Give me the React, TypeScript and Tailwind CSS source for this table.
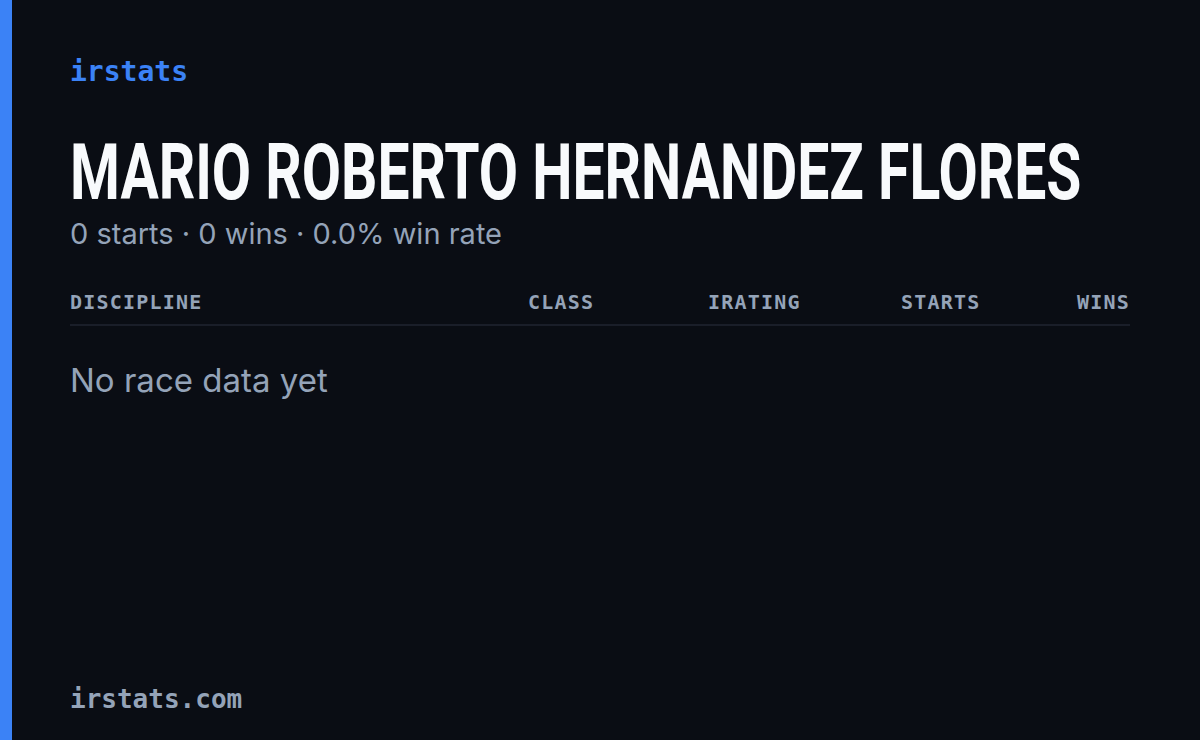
import React from "react";

export default function App() {
  const mono = { fontFamily: "'DejaVu Sans Mono', 'Liberation Mono', monospace" };
  const sans = { fontFamily: "'Inter', 'Open Sans', sans-serif" };
  return (
    <div className="flex h-[740px] w-[1200px] overflow-hidden bg-[#0a0d14]">
      <div className="w-[12px] shrink-0 bg-[#3b82f6]" />
      <div className="flex min-w-0 flex-1 flex-col pl-[58px] pr-[70px] pt-[55px] pb-[26px]">
        <div className="text-[28px] leading-[34px] font-bold text-[#3b82f6]" style={mono}>
          irstats
        </div>
        <div className="mt-[46px] h-[77px]">
          <div
            className="inline-block origin-left scale-x-[0.74] whitespace-nowrap text-[77px] font-bold leading-[77px] text-[#f8fafc]"
            style={{ fontFamily: "'Roboto', 'Liberation Sans', sans-serif" }}
          >
            MARIO ROBERTO HERNANDEZ FLORES
          </div>
        </div>
        <div className="mt-[2px] text-[29px] leading-[40px] text-[#94a3b8]" style={sans}>
          0 starts · 0 wins · 0.0% win rate
        </div>
        <div
          className="mt-[36px] grid grid-cols-[458px_180px_193px_176px_1fr] border-b-2 border-[#1a1e29] pb-[10px] text-[20px] font-semibold leading-[24px] tracking-[0.06em] text-[#94a3b8]"
          style={mono}
        >
          <div>DISCIPLINE</div>
          <div>CLASS</div>
          <div>IRATING</div>
          <div>STARTS</div>
          <div className="text-right">WINS</div>
        </div>
        <div className="mt-[34px] text-[33px] leading-[40px] text-[#94a3b8]" style={sans}>
          No race data yet
        </div>
        <div className="flex-1" />
        <div className="text-[26px] font-bold leading-[30px] text-[#94a3b8]" style={mono}>
          irstats.com
        </div>
      </div>
    </div>
  );
}
